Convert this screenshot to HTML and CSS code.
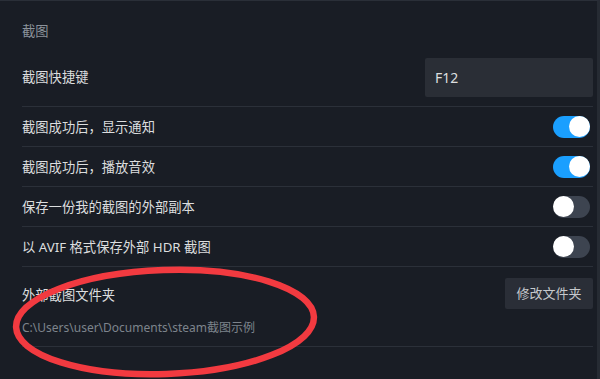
FILE: index.html
```html
<!DOCTYPE html>
<html lang="zh-CN">
<head>
<meta charset="utf-8">
<title>截图设置</title>
<link rel="stylesheet" href="styles.css">
</head>
<body>
<div class="panel">
  <div class="section-title">截图</div>
  <div class="row row-key">
    <div class="label">截图快捷键</div>
    <div class="keybox">F12</div>
  </div>
  <div class="row">
    <div class="label">截图成功后，显示通知</div>
    <div class="toggle on"><span class="knob"></span></div>
  </div>
  <div class="row">
    <div class="label">截图成功后，播放音效</div>
    <div class="toggle on"><span class="knob"></span></div>
  </div>
  <div class="row">
    <div class="label">保存一份我的截图的外部副本</div>
    <div class="toggle"><span class="knob"></span></div>
  </div>
  <div class="row">
    <div class="label">以 AVIF 格式保存外部 HDR 截图</div>
    <div class="toggle"><span class="knob"></span></div>
  </div>
  <div class="folder">
    <div class="folder-head">
      <div class="label">外部截图文件夹</div>
      <div class="btn">修改文件夹</div>
    </div>
    <div class="path">C:\Users\user\Documents\steam截图示例</div>
  </div>
  <svg class="mark" width="600" height="379" viewBox="0 0 600 379">
    <ellipse cx="165" cy="322" rx="149" ry="52" fill="none" stroke="#f23a40" stroke-width="6.5" transform="rotate(-2 165 322)"/>
  </svg>
</div>
</body>
</html>
```
FILE: styles.css
```css
html, body {
  margin: 0;
  padding: 0;
  background: #191d25;
}
body {
  width: 600px;
  height: 379px;
  overflow: hidden;
  font-family: "Noto Sans", "Noto Sans CJK SC", sans-serif;
}
.panel {
  position: relative;
  box-sizing: border-box;
  width: 600px;
  height: 379px;
  border-top: 1px solid #2a2f38;
  border-right: 3px solid #262b33;
  padding: 0 4px 0 22px;
  background: #191d25;
}
.section-title {
  color: #8b929a;
  font-size: 13.3px;
  line-height: 18px;
  padding-top: 21px;
  height: 26px;
}
.row {
  display: flex;
  align-items: center;
  justify-content: space-between;
  height: 39px;
  border-bottom: 1px solid #2b3039;
}
.row-key {
  height: 58px;
}
.label {
  color: #dcdedf;
  font-size: 13.3px;
  line-height: 18px;
}
.keybox {
  box-sizing: border-box;
  width: 168px;
  height: 39px;
  background: #2a2e36;
  border-radius: 2px;
  color: #dcdedf;
  font-size: 14px;
  line-height: 39px;
  padding-left: 10px;
}
.toggle {
  position: relative;
  width: 37px;
  height: 22px;
  border-radius: 11px;
  background: #3d4450;
  margin-right: 3px;
}
.toggle.on {
  background: #1a9fff;
}
.knob {
  position: absolute;
  top: 0.5px;
  left: 0;
  width: 21px;
  height: 21px;
  border-radius: 50%;
  background: #ffffff;
}
.toggle.on .knob {
  left: auto;
  right: 0;
}
.folder {
  border-bottom: 1px solid #2b3039;
  padding-top: 11px;
  height: 68px;
}
.folder-head {
  display: flex;
  align-items: center;
  justify-content: space-between;
  height: 31px;
}
.folder-head .label {
  margin-top: 3px;
}
.btn {
  width: 88px;
  height: 31px;
  background: #2a2e37;
  border-radius: 2px;
  color: #c6c9cd;
  font-size: 13px;
  line-height: 31px;
  text-align: center;
}
.path {
  color: #7d848c;
  font-size: 12px;
  line-height: 18px;
  margin-top: 10px;
}
.mark {
  position: absolute;
  left: 0;
  top: -1px;
  pointer-events: none;
}
```
